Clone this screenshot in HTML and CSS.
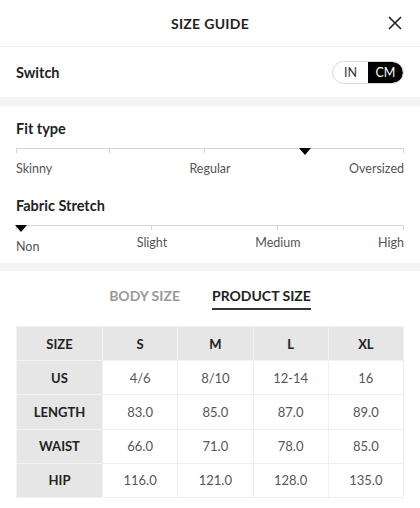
FILE: index.html
```html
<!DOCTYPE html>
<html>
<head>
<meta charset="utf-8">
<link rel="stylesheet" href="styles.css">
</head>
<body>
<div class="page">
  <header class="header">
    <span></span>
    <h1 class="title">SIZE GUIDE</h1>
    <button class="close" aria-label="Close">
      <svg width="14" height="14" viewBox="0 0 14 14"><path d="M1 1L13 13M13 1L1 13" stroke="#222" stroke-width="1.6" fill="none"/></svg>
    </button>
  </header>

  <div class="switch-row">
    <span class="row-title">Switch</span>
    <div class="toggle">
      <span class="opt">IN</span>
      <span class="opt active">CM</span>
    </div>
  </div>

  <div class="band"></div>

  <section class="scales">
    <div class="scale-block">
      <h2 class="row-title">Fit type</h2>
      <div class="track">
        <span class="tick" style="left:0%"></span>
        <span class="tick" style="left:24.2%"></span>
        <span class="tick" style="left:48.7%"></span>
        <span class="tick" style="left:100%"></span>
        <span class="marker" style="left:74.5%"></span>
      </div>
      <div class="labels fit-labels">
        <span class="l-start">Skinny</span>
        <span class="l-center">Regular</span>
        <span class="l-end">Oversized</span>
      </div>
    </div>
    <div class="scale-block second">
      <h2 class="row-title">Fabric Stretch</h2>
      <div class="track">
        <span class="tick" style="left:0%"></span>
        <span class="tick" style="left:35.1%"></span>
        <span class="tick" style="left:67.5%"></span>
        <span class="tick" style="left:100%"></span>
        <span class="marker" style="left:1.4%"></span>
      </div>
      <div class="labels stretch-labels">
        <span class="l-start low">Non</span>
        <span class="l-center">Slight</span>
        <span class="l-center">Medium</span>
        <span class="l-end">High</span>
      </div>
    </div>
  </section>

  <div class="band band2"></div>

  <nav class="tabs">
    <span class="tab">BODY SIZE</span>
    <span class="tab active">PRODUCT SIZE</span>
  </nav>

  <table class="size-table">
    <colgroup>
      <col class="c-first"><col class="c"><col class="c"><col class="c"><col class="c">
    </colgroup>
    <thead>
      <tr><th>SIZE</th><th>S</th><th>M</th><th>L</th><th>XL</th></tr>
    </thead>
    <tbody>
      <tr><th>US</th><td>4/6</td><td>8/10</td><td>12-14</td><td>16</td></tr>
      <tr><th>LENGTH</th><td>83.0</td><td>85.0</td><td>87.0</td><td>89.0</td></tr>
      <tr><th>WAIST</th><td>66.0</td><td>71.0</td><td>78.0</td><td>85.0</td></tr>
      <tr><th>HIP</th><td>116.0</td><td>121.0</td><td>128.0</td><td>135.0</td></tr>
    </tbody>
  </table>
</div>
</body>
</html>
```

FILE: styles.css
```css
* { box-sizing: border-box; }
html, body { margin: 0; padding: 0; background: #fff; }
body {
  font-family: Lato, "Noto Sans", "Liberation Sans", sans-serif;
  color: #222;
  width: 420px;
}
.page { width: 420px; }

.header {
  height: 47px;
  display: grid;
  grid-template-columns: 1fr auto 1fr;
  align-items: center;
  border-bottom: 1px solid #eeeeee;
}
.title {
  margin: 0;
  font-size: 14px;
  font-weight: 700;
  letter-spacing: 0.3px;
  color: #222;
}
.close {
  justify-self: end;
  margin-right: 18px;
  border: 0;
  background: none;
  padding: 0;
  width: 14px;
  height: 14px;
  display: flex;
}

.switch-row {
  height: 50px;
  padding: 0 16px;
  display: flex;
  align-items: center;
  justify-content: space-between;
}
.row-title {
  margin: 0;
  font-size: 14.5px;
  font-weight: 700;
  color: #222;
}
.toggle {
  display: flex;
  height: 23px;
  width: 72px;
  border: 1px solid #d8d8d8;
  border-radius: 12px;
  overflow: hidden;
}
.opt {
  flex: 1;
  display: flex;
  align-items: center;
  justify-content: center;
  font-size: 12.5px;
  color: #333;
}
.opt.active {
  background: #000;
  color: #fff;
  border-radius: 0 12px 12px 0;
}

.band { height: 9px; background: #f4f4f4; }
.band2 { height: 8px; }

.scales { padding: 14px 16px 8px; }
.scale-block .row-title { line-height: 18px; }
.scale-block.second { margin-top: 20px; }
.track {
  position: relative;
  height: 1px;
  background: #d6d6d6;
  margin-top: 10px;
}
.tick {
  position: absolute;
  top: 0;
  width: 1px;
  height: 5px;
  background: #d6d6d6;
  margin-left: -1px;
}
.tick:first-child { margin-left: 0; }
.marker {
  position: absolute;
  top: 0;
  width: 0;
  height: 0;
  margin-left: -6px;
  border-left: 6px solid transparent;
  border-right: 6px solid transparent;
  border-top: 7px solid #000;
}
.labels {
  display: grid;
  font-size: 12.5px;
  color: #555;
  line-height: 16px;
}
.fit-labels {
  grid-template-columns: 1fr auto 1fr;
  margin-top: 12px;
}
.stretch-labels {
  grid-template-columns: 68px 136px 116px 68px;
  margin-top: 9px;
}
.l-start { justify-self: start; }
.l-center { justify-self: center; }
.l-end { justify-self: end; }
.low { margin-top: 4px; }

.tabs {
  display: flex;
  justify-content: center;
  gap: 32px;
  padding: 16px 0 0;
  height: 55px;
}
.tab {
  font-size: 14px;
  font-weight: 700;
  color: #999;
  height: 23px;
  line-height: 18px;
}
.tab.active {
  color: #222;
  border-bottom: 2.5px solid #333;
}

.size-table {
  margin-left: 16px;
  width: 388px;
  border-collapse: collapse;
  table-layout: fixed;
  font-size: 13px;
}
.c-first { width: 86px; }
.size-table th,
.size-table td {
  height: 34.2px;
  padding: 0;
  text-align: center;
  border: 1px solid #efefef;
}
.size-table th {
  background: #e6e6e6;
  font-weight: 700;
  color: #222;
  border-color: #f3f3f3;
}
.size-table td {
  color: #555;
  background: #fff;
}
```
